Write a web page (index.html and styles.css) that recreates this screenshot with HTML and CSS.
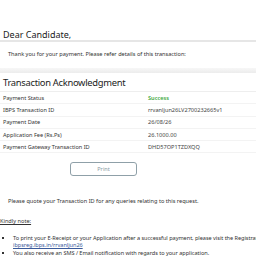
FILE: index.html
```html
<!DOCTYPE html>
<html>
<head>
<meta charset="utf-8">
<link rel="stylesheet" href="styles.css">
</head>
<body>
<div class="page">
  <div class="greet">Dear Candidate,</div>
  <div class="thanks">Thank you for your payment. Please refer details of this transaction:</div>
  <div class="band"></div>
  <h2 class="title">Transaction Acknowledgment</h2>
  <div class="table">
    <div class="row"><span class="label">Payment Status</span><span class="value success">Success</span></div>
    <div class="row"><span class="label">IBPS Transaction ID</span><span class="value">rrvanljun26LV2700232665v1</span></div>
    <div class="row"><span class="label">Payment Date</span><span class="value">26/08/26</span></div>
    <div class="row"><span class="label">Application Fee (Rs.Ps)</span><span class="value">26.1000.00</span></div>
    <div class="row"><span class="label">Payment Gateway Transaction ID</span><span class="value">DHD57OP1TZDXQQ</span></div>
  </div>
  <div class="actions"><button class="print">Print</button></div>
  <div class="quote">Please quote your Transaction ID for any queries relating to this request.</div>
  <div class="note">Kindly note:</div>
  <ul class="list">
    <li>To print your E-Receipt or your Application after a successful payment, please visit the Registration Form <br><a class="link">ibpsreg.ibps.in/rrvanljun26</a></li>
    <li>You also receive an SMS / Email notification with regards to your application.</li>
  </ul>
</div>
</body>
</html>
```
FILE: styles.css
```css
html, body { margin: 0; padding: 0; background: #fff; }
body { font-family: "Noto Sans", "Open Sans", sans-serif; color: #333; overflow: hidden; width: 256px; height: 256px; }
.page { padding-top: 29px; overflow: hidden; height: 256px; box-sizing: border-box; }
.greet { font-size: 9px; line-height: 11px; padding-left: 3px; border-bottom: 2px solid #e6e6e6; color: #222; }
.thanks { font-size: 5.6px; line-height: 10px; padding: 7px 0 0 8px; white-space: nowrap; }
.band { height: 5px; margin-top: 9px; background: linear-gradient(#f7f7f7, #ececec); }
.title { font-size: 9.4px; letter-spacing: -0.3px; font-weight: normal; margin: 0; padding: 2px 0 0 3px; line-height: 16px; color: #222; border-bottom: 1px solid #eee; }
.table { font-size: 5.6px; }
.row { display: flex; height: 11.3px; align-items: center; border-bottom: 1px solid #f3f3f3; }
.label { width: 145px; padding-left: 3px; }
.value { color: #444; }
.success { color: #3aa83a; font-weight: 600; }
.actions { padding: 8.5px 0 0 70px; height: 14px; }
.print { display: block; width: 67px; height: 14px; border: 1px solid #8fa0a8; border-radius: 3px; background: #fff; color: #8a9aa4; font-family: "Noto Sans", sans-serif; font-size: 5.5px; padding: 0; }
.quote { font-size: 5.6px; line-height: 10px; padding: 20px 0 0 8px; white-space: nowrap; }
.note { font-size: 5.6px; line-height: 10px; text-decoration: underline; padding-top: 10px; }
.list { font-size: 5.6px; letter-spacing: -0.05px; line-height: 6.5px; margin: 9.5px 0 0; padding-left: 13px; white-space: nowrap; list-style: square; }
.list li { margin-bottom: 1.5px; }
.link { color: #3a5a9a; text-decoration: underline; }
```
